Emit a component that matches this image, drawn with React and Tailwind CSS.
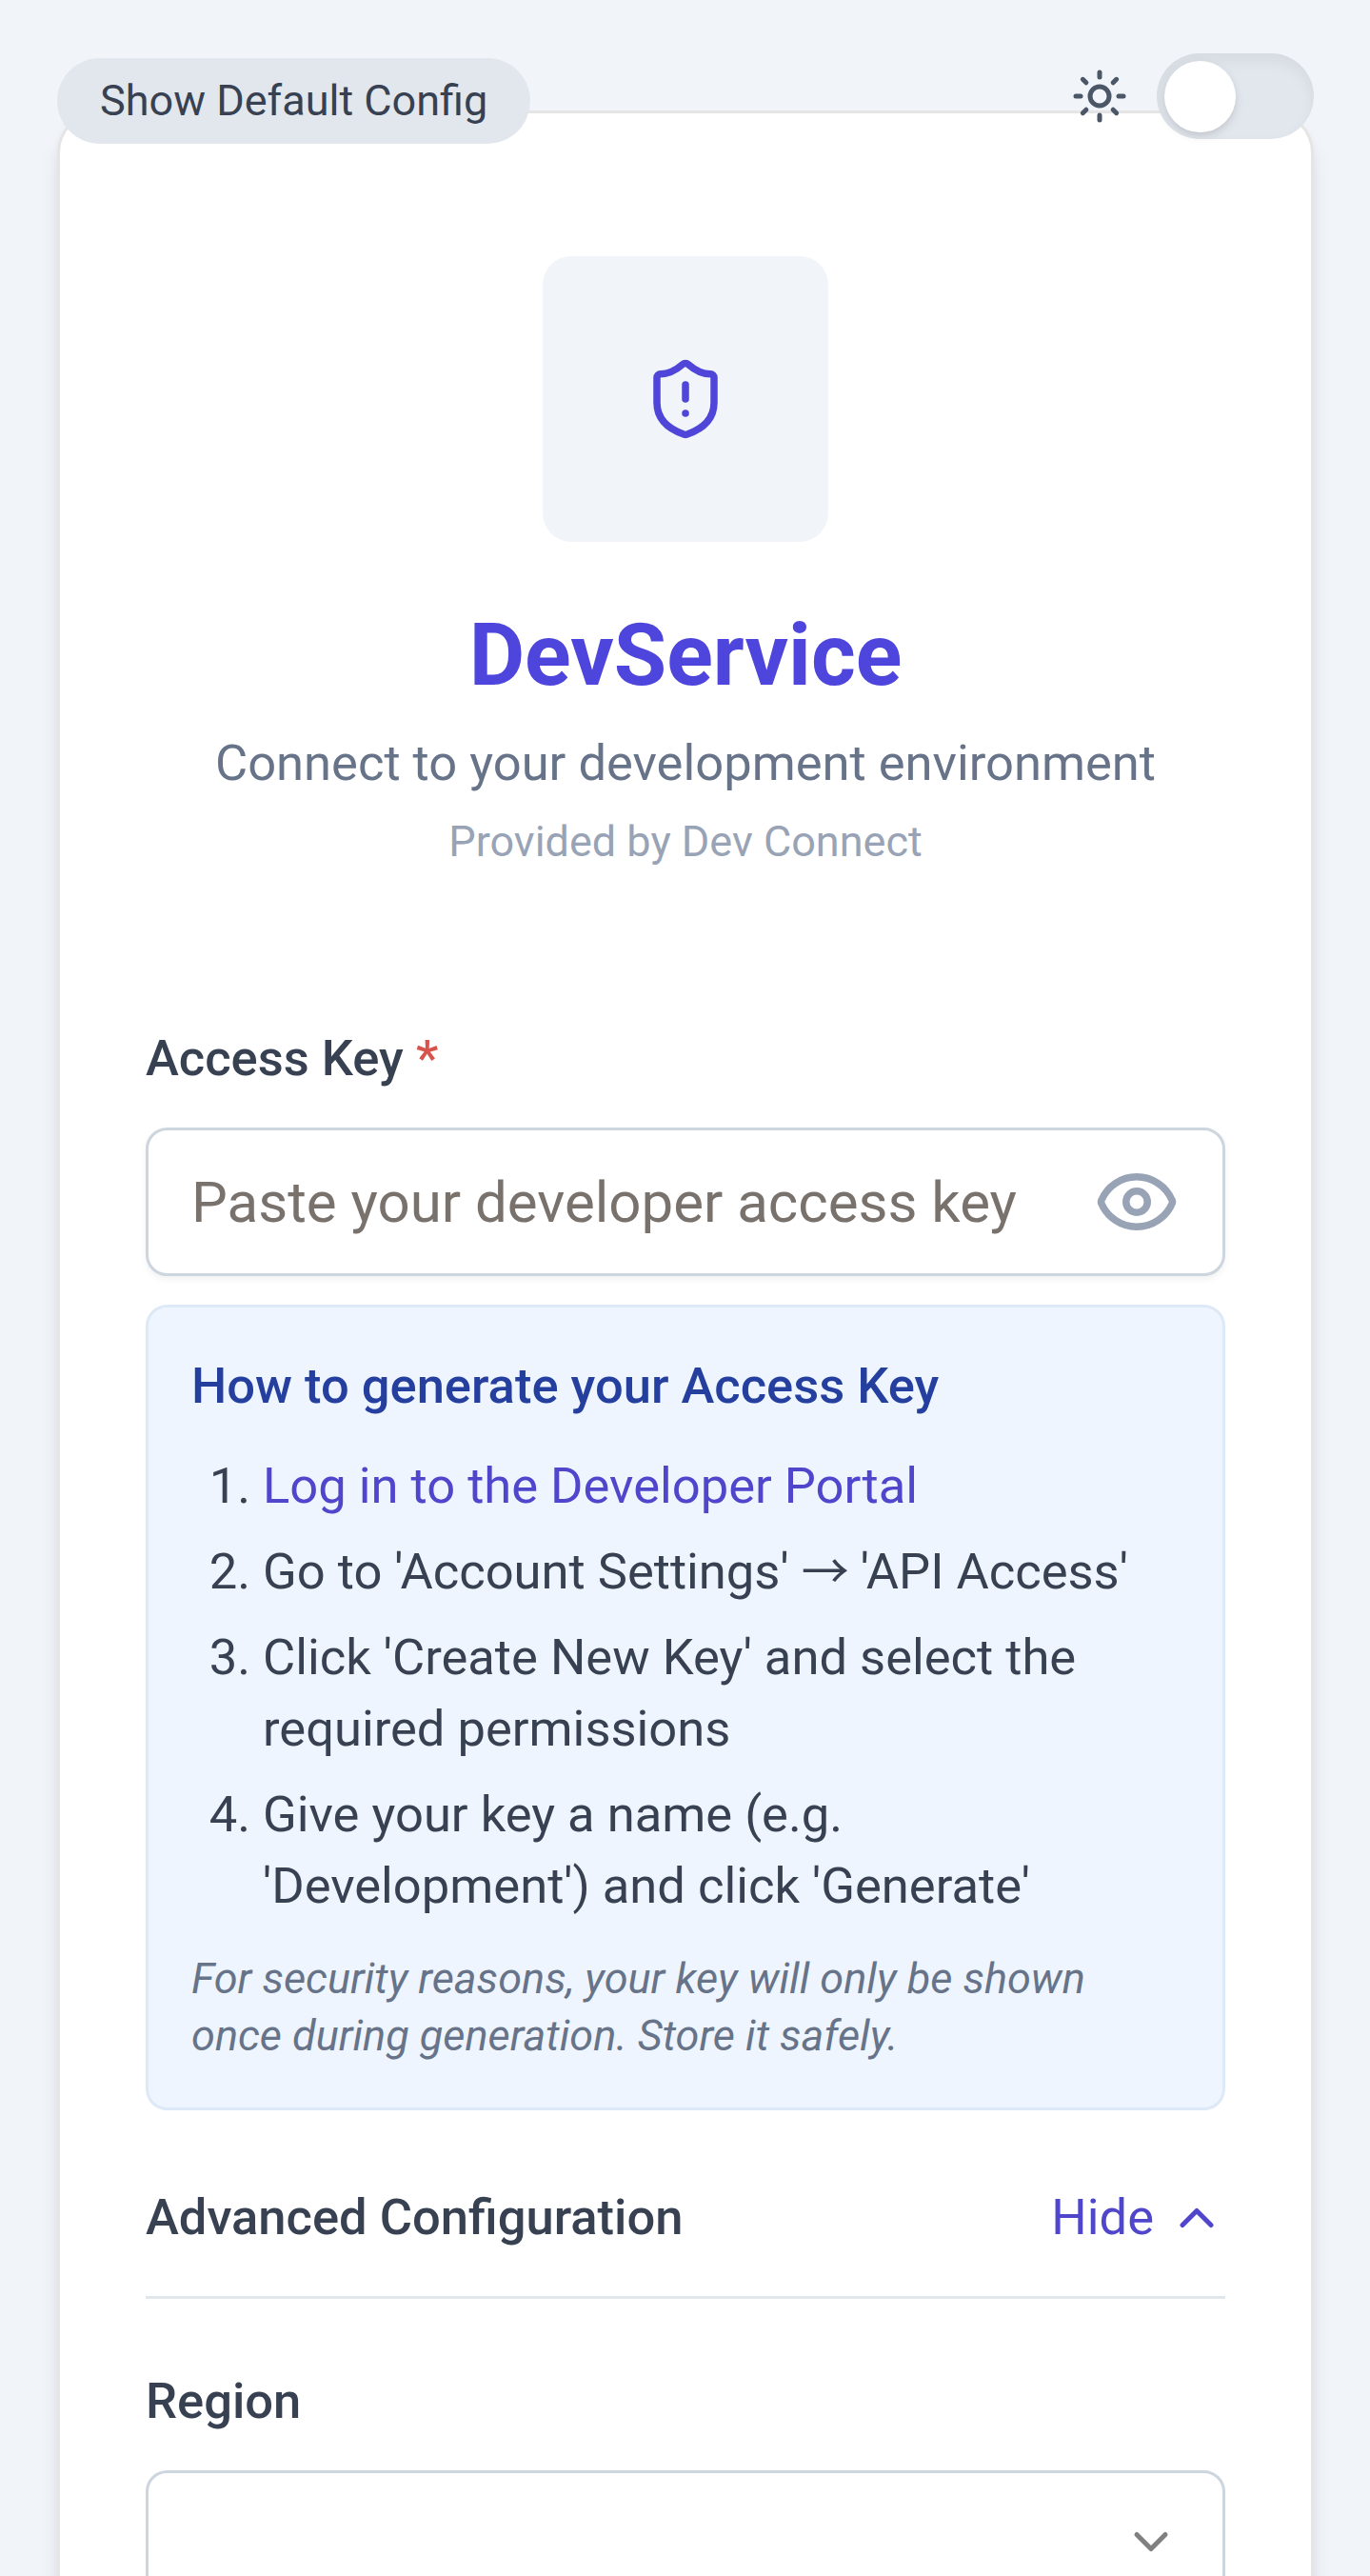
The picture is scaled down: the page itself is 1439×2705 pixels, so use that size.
import { ChevronDown, ChevronUp, Eye, ShieldAlert, Sun } from "lucide-react";

function Arrow() {
  return (
    <span className="font-['Noto_Sans_CJK_SC',sans-serif] text-[50px] leading-none tracking-[-1px]">→</span>
  );
}

function TopControls() {
  return (
    <div className="absolute top-14 right-[59px] left-[60px] z-10 flex items-start justify-between">
      <button className="mt-[5px] h-[90px] rounded-full bg-[#e2e7ee] px-[45px] text-[45px] leading-[60px] text-[#374151]">
        Show Default Config
      </button>
      <div className="flex items-center gap-[30px]">
        <Sun className="size-[60px] text-[#4b5667]" />
        <button
          role="switch"
          aria-checked="false"
          aria-label="Theme"
          className="flex h-[90px] w-[165px] items-center rounded-full bg-[#e2e7ee] px-2 shadow-[inset_0_7.5px_15px_rgba(0,0,0,0.06)]"
        >
          <span className="size-[75px] rounded-full bg-white shadow-[0_4px_11px_rgba(0,0,0,0.1),0_4px_8px_-4px_rgba(0,0,0,0.1)]" />
        </button>
      </div>
    </div>
  );
}

function Label({ children }) {
  return <label className="mb-[35px] block text-[52.5px] leading-[75px] font-medium text-[#374151]">{children}</label>;
}

export default function App() {
  return (
    <main className="relative h-[2705px] w-[1439px] overflow-hidden bg-[#f1f5fa] pt-[116px] pr-[59px] pl-[60px] font-['Roboto',sans-serif]">
      <TopControls />
      <section className="h-[2900px] rounded-[45px] border-[3px] border-[#e5e5e5] bg-white px-[90px] pt-[150px] shadow-[0_15px_22.5px_-3.75px_rgba(0,0,0,0.1),0_7.5px_15px_-7.5px_rgba(0,0,0,0.1)]">
        <header className="flex flex-col items-center text-center">
          <div className="flex size-[300px] items-center justify-center rounded-[30px] bg-[#f1f5fa]">
            <ShieldAlert className="size-[90px] text-[#4f46d9]" />
          </div>
          <h1 className="mt-[60px] text-[90px] leading-[120px] font-bold text-[#4e46dc]">DevService</h1>
          <p className="mt-[15px] text-[52.5px] leading-[75px] text-[#667388]">Connect to your development environment</p>
          <p className="mt-[15px] text-[45px] leading-[60px] text-[#98a3b5]">Provided by Dev Connect</p>
        </header>

        <div className="mt-[160px]">
          <Label>
            Access Key <span className="text-[#d9534d]">*</span>
          </Label>
          <div className="flex h-[156px] items-center justify-between rounded-[22.5px] border-[3px] border-[#cdd5de] bg-white px-[45px] shadow-[0_3.75px_7.5px_rgba(0,0,0,0.05)]">
            <span className="mt-px text-[60px] leading-[90px] whitespace-nowrap text-[#78716c]">
              Paste your developer access key
            </span>
            <Eye className="size-[90px] shrink-0 text-[#98a3b6]" />
          </div>
          <div className="mt-[30px] rounded-[22.5px] border-[3px] border-[#dee9f7] bg-[#eef5fe] p-[45px]">
            <h2 className="text-[52.5px] leading-[75px] font-medium text-[#253f9f]">How to generate your Access Key</h2>
            <ol className="mt-[30px] list-decimal space-y-[15px] pl-[75px] text-[52.5px] leading-[75px] text-[#374151]">
              <li>
                <a className="text-[#4f46cc]">Log in to the Developer Portal</a>
              </li>
              <li>
                Go to 'Account Settings' <Arrow /> 'API Access'
              </li>
              <li>Click 'Create New Key' and select the required permissions</li>
              <li>Give your key a name (e.g. 'Development') and click 'Generate'</li>
            </ol>
            <p className="mt-[30px] text-[45px] leading-[60px] text-[#667388] italic">
              For security reasons, your key will only be shown once during generation. Store it safely.
            </p>
          </div>
        </div>

        <div className="mt-[75px] flex items-center justify-between border-b-[3px] border-[#e2e7ec] pb-[45px] text-[52.5px] leading-[75px]">
          <h2 className="font-medium text-[#374151]">Advanced Configuration</h2>
          <button className="flex items-center gap-[15px] text-[#4f46cc]">
            Hide
            <ChevronUp className="size-[60px]" />
          </button>
        </div>

        <div className="mt-[70px]">
          <Label>Region</Label>
          <div className="flex h-[150px] items-center justify-end rounded-[22.5px] border-[3px] border-[#cdd5de] bg-white px-[45px]">
            <ChevronDown className="size-[60px] text-[#808080]" />
          </div>
        </div>
      </section>
    </main>
  );
}
